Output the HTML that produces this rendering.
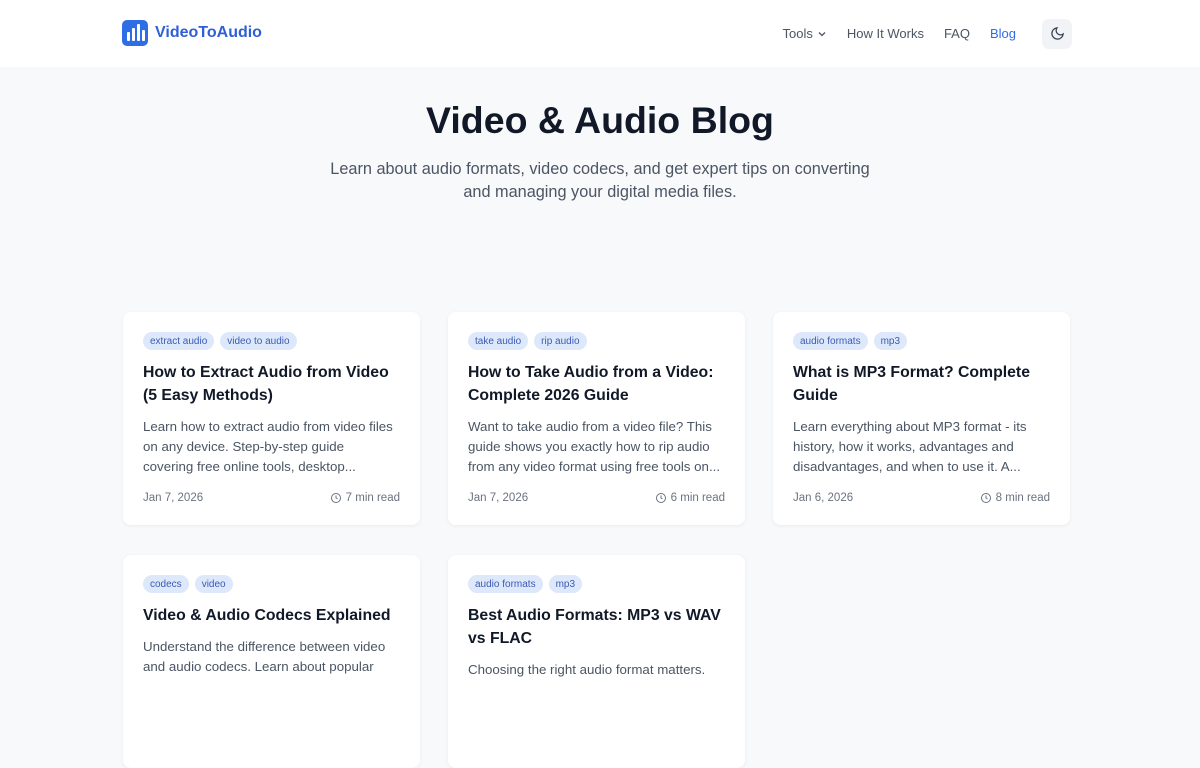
<!DOCTYPE html>
<html><head><meta charset="utf-8"><style>
*{box-sizing:border-box;margin:0;padding:0}
body{width:1200px;height:677px;overflow:hidden;background:#f8f9fb;font-family:"Liberation Sans",sans-serif;color:#111827}
header{height:67px;background:#fff;position:relative}
.logo{position:absolute;left:122px;top:20px;display:flex;align-items:center;gap:7px;color:#2f5fd6;font-weight:700;font-size:16px}
.logo .ic{width:26px;height:26px;background:#2f6de6;border-radius:5px;position:relative}
.logo .ic i{position:absolute;bottom:5px;width:3px;background:#fff;border-radius:1px}
nav{position:absolute;right:0;top:0;height:67px;display:flex;align-items:center;font-size:13px;color:#4b5563}
nav span{margin-right:20px}
.moon{width:30px;height:30px;border-radius:7px;background:#f1f3f6;display:flex;align-items:center;justify-content:center;margin-right:128px;margin-left:6px}
h1{text-align:center;font-size:37.5px;font-weight:700;margin-top:32px;color:#111827}
.sub{text-align:center;font-size:16.3px;color:#4b5563;line-height:23px;margin-top:16px}
.grid{position:absolute;left:123px;top:312px;display:grid;grid-template-columns:297px 297px 297px;column-gap:28px;row-gap:30px}
.card{background:#fff;border-radius:8px;height:213px;padding:20px;box-shadow:0 1px 4px rgba(0,0,0,.06);position:relative}
.tags{display:flex;gap:6px}
.tags b{font-weight:400;font-size:10px;color:#3b5bb5;background:#dde8fb;border-radius:9px;padding:0 7px;height:18px;display:flex;align-items:center}
.card h3{font-size:15.8px;font-weight:700;line-height:23px;margin-top:11px;color:#111827}
.card p{font-size:13.3px;line-height:20px;color:#4b5563;margin-top:10px;padding-right:4px}
.meta{position:absolute;left:20px;right:20px;top:178px;height:16px;display:flex;justify-content:space-between;align-items:center;font-size:11.5px;color:#6b7280}
.meta span{display:flex;align-items:center;gap:4px}
</style></head><body>
<header>
<div class="logo"><div class="ic"><i style="left:5px;height:9px"></i><i style="left:10px;height:13px"></i><i style="left:15px;height:17px"></i><i style="left:20px;height:11px"></i></div>VideoToAudio</div>
<nav><span style="display:flex;align-items:center;gap:4px">Tools <svg width="10" height="10" viewBox="0 0 10 10" fill="none" stroke="#4b5563" stroke-width="1.3"><path d="M2 3.5l3 3 3-3"/></svg></span><span>How It Works</span><span>FAQ</span><span style="color:#2f6de6">Blog</span>
<div class="moon"><svg width="15" height="15" viewBox="0 0 24 24" fill="none" stroke="#374151" stroke-width="2"><path d="M21 12.8A9 9 0 1 1 11.2 3a7 7 0 0 0 9.8 9.8z"/></svg></div></nav>
</header>
<h1>Video &amp; Audio Blog</h1>
<div class="sub">Learn about audio formats, video codecs, and get expert tips on converting<br>and managing your digital media files.</div>
<div class="grid">
<div class="card"><div class="tags"><b>extract audio</b><b>video to audio</b></div><h3>How to Extract Audio from Video (5 Easy Methods)</h3><p>Learn how to extract audio from video files on any device. Step-by-step guide covering free online tools, desktop...</p><div class="meta"><span>Jan 7, 2026</span><span><svg width="12" height="12" viewBox="0 0 24 24" fill="none" stroke="#6b7280" stroke-width="2"><circle cx="12" cy="12" r="9"/><path d="M12 7v5l3 2"/></svg>7 min read</span></div></div>
<div class="card"><div class="tags"><b>take audio</b><b>rip audio</b></div><h3>How to Take Audio from a Video: Complete 2026 Guide</h3><p>Want to take audio from a video file? This guide shows you exactly how to rip audio from any video format using free tools on...</p><div class="meta"><span>Jan 7, 2026</span><span><svg width="12" height="12" viewBox="0 0 24 24" fill="none" stroke="#6b7280" stroke-width="2"><circle cx="12" cy="12" r="9"/><path d="M12 7v5l3 2"/></svg>6 min read</span></div></div>
<div class="card"><div class="tags"><b>audio formats</b><b>mp3</b></div><h3>What is MP3 Format? Complete Guide</h3><p>Learn everything about MP3 format - its history, how it works, advantages and disadvantages, and when to use it. A...</p><div class="meta"><span>Jan 6, 2026</span><span><svg width="12" height="12" viewBox="0 0 24 24" fill="none" stroke="#6b7280" stroke-width="2"><circle cx="12" cy="12" r="9"/><path d="M12 7v5l3 2"/></svg>8 min read</span></div></div>
<div class="card"><div class="tags"><b>codecs</b><b>video</b></div><h3>Video &amp; Audio Codecs Explained</h3><p>Understand the difference between video and audio codecs. Learn about popular</p></div>
<div class="card"><div class="tags"><b>audio formats</b><b>mp3</b></div><h3>Best Audio Formats: MP3 vs WAV vs FLAC</h3><p>Choosing the right audio format matters.</p></div>
</div>
</body></html>
